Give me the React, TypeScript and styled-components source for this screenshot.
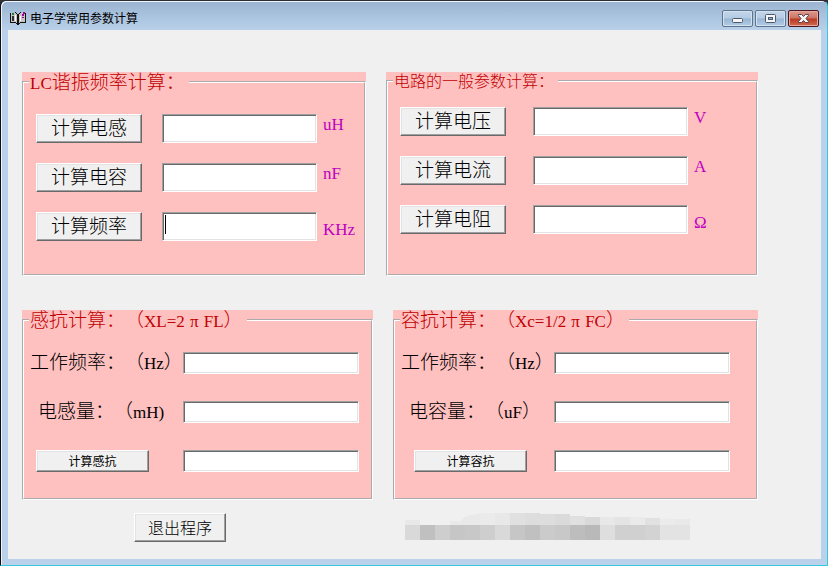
import React from "react";
import styled, { createGlobalStyle, css } from "styled-components";

const GlobalStyle = createGlobalStyle`
  *, *::before, *::after { box-sizing: border-box; }
  body {
    margin: 0;
    background: #2f3138;
    font-family: "Noto Sans CJK SC", sans-serif;
    font-weight: 300;
    text-spacing-trim: space-all;
    color: #000;
  }
`;

const Window = styled.div`
  display: flex;
  flex-direction: column;
  min-height: 100vh;
  padding: 0 6px 6px;
  background: linear-gradient(#9ab4d1 0, #b9d1ea 30px, #b9d1ea);
  border: 1px solid #35c8dc;
  border-top-color: #2b2d33;
  border-left-color: #111;
  border-radius: 6px 6px 0 0;
  box-shadow: inset 1px 1px 0 #eef5fc;
`;

const TitleBar = styled.header`
  display: flex;
  align-items: center;
  gap: 4px;
  height: 29px;
  padding: 5px 2px 0 3px;
`;

const Title = styled.h1`
  flex: 1;
  margin: 0;
  font-size: 12px;
  line-height: 16px;
  font-weight: 400;
`;

const Captions = styled.div`
  display: flex;
  align-self: flex-start;
  gap: 2px;
  padding-top: 4px;
`;

const CaptionButton = styled.button<{ $close?: boolean }>`
  display: grid;
  place-items: center;
  width: 31px;
  height: 17px;
  padding: 0;
  border: 1px solid ${(p) => (p.$close ? "#4d1420" : "#5f7389")};
  border-radius: 2px;
  background: ${(p) =>
    p.$close
      ? "linear-gradient(#dc9a8e 0, #cd7465 7px, #b93a22 8px, #cf6a50)"
      : "linear-gradient(#c3d6ea 0, #b3cbe3 7px, #98b5d3 8px, #b4cde6)"};
  box-shadow: inset 0 0 0 1px ${(p) => (p.$close ? "#e6a99d" : "#d3e2f1")};
`;

const Client = styled.main`
  flex: 1;
  margin-left: 1px;
  padding: 42px 63px 17px 14px;
  background: #f0f0f0;
`;

const PanelRow = styled.div`
  display: flex;
  gap: 20px;
  margin-bottom: 34px;

  & + & { margin-bottom: 13px; }
`;

const Panel = styled.section<{ $share: number }>`
  display: flex;
  flex: ${(p) => p.$share} 1 0;
  min-width: 0;
  background: #ffc0c0;
`;

const Group = styled.fieldset<{ $bottom: number }>`
  flex: 1;
  min-width: 0;
  margin: 0;
  padding: 0 0 ${(p) => p.$bottom}px;
  border: 2px groove #fff;
`;

const Legend = styled.legend<{ $small?: boolean }>`
  margin-left: 5px;
  padding: 0 4px 0 1px;
  color: #c00000;
  white-space: nowrap;
  font-size: ${(p) => (p.$small ? 16 : 19)}px;
  height: ${(p) => (p.$small ? 18 : 20)}px;
  line-height: ${(p) => (p.$small ? 16 : 18)}px;
`;

const Latin = styled.span`
  font-family: "Liberation Serif", serif;
  font-size: 17px;
  font-weight: 400;
  line-height: 0;
`;

const WideSymbol = styled(Latin)`
  display: inline-block;
  width: 19px;
  text-align: center;
`;

const CalcRows = styled.div<{ $top: number }>`
  display: grid;
  gap: 20px;
  padding: ${(p) => p.$top}px 12px 0;
`;

const CalcRow = styled.div<{ $gap: number }>`
  display: grid;
  grid-template-columns: 106px minmax(0, 155px) auto;
  column-gap: ${(p) => p.$gap}px;
  height: 29px;
`;

const raised = css`
  padding: 0;
  border: 1px solid;
  border-color: #fff #696969 #696969 #fff;
  background: #f0f0f0;
  box-shadow: inset -1px -1px 0 #a0a0a0, inset 1px 1px 0 #e3e3e3;
  color: #000;
  font-family: inherit;
  white-space: nowrap;
`;

const PushButton = styled.button`
  ${raised}
  padding-bottom: 4px;
  font-size: 19px;
  line-height: 22px;
  font-weight: 300;
`;

const SmallButton = styled.button<{ $indent: number }>`
  ${raised}
  width: 113px;
  height: 22px;
  margin-left: ${(p) => p.$indent}px;
  font-size: 12px;
  line-height: 18px;
  font-weight: 400;
`;

const ExitButton = styled.button`
  ${raised}
  width: 92px;
  height: 29px;
  padding-bottom: 2px;
  font-size: 16px;
  line-height: 22px;
  font-weight: 300;
`;

const Field = styled.input<{ $caret?: boolean }>`
  width: 100%;
  min-width: 0;
  height: 100%;
  padding: 0 3px;
  border: 1px solid;
  border-color: #a0a0a0 #fff #fff #a0a0a0;
  border-radius: 0;
  outline: none;
  background: #fff;
  box-shadow: inset 1px 1px 0 #696969, inset -1px -1px 0 #e3e3e3;
  font: 16px "Liberation Serif", serif;
  ${(p) =>
    p.$caret &&
    css`
      background: linear-gradient(#000, #000) 2px 2px / 1px 19px no-repeat #fff;
    `}
`;

const FieldAndUnit = styled.div`
  display: grid;
  grid-template-columns: 155px auto;
  column-gap: 6px;
`;

const Unit = styled.label<{ $low?: boolean }>`
  align-self: ${(p) => (p.$low ? "end" : "start")};
  color: #c000c0;
  font-family: "Liberation Serif", serif;
  font-size: 17px;
  font-weight: 400;
  line-height: 22px;
`;

const FormRows = styled.div`
  display: grid;
  gap: 27px;
  padding: 22px 12px 0 6px;
`;

const FormRow = styled.div`
  display: grid;
  grid-template-columns: 153px minmax(0, 176px);
  height: 22px;
`;

const FormLabel = styled.label<{ $indent?: number }>`
  padding-left: ${(p) => p.$indent ?? 0}px;
  font-size: 19px;
  line-height: 18px;
  white-space: nowrap;
`;

const Footer = styled.footer`
  display: flex;
  align-items: flex-start;
  gap: 179px;
  padding-left: 112px;
`;

const BookIcon = () => (
  <svg width="16" height="14" viewBox="0 0 16 14" aria-hidden="true">
    <path d="M1 2h5l2 2 2-2h5v10h-5l-2 1-2-1H1z" fill="#c8c4c4" />
    <path d="M0 2h1v10H0zM1 11h5v1H1zM6 12h1v1H6zM7 3h2v11H7zM9 12h1v1H9zM10 11h5v1h-5zM15 2h1v10h-1zM5 1h1v1H5zM6 2h1v1H6zM9 2h1v1H9zM10 1h1v1h-1z" fill="#111" />
    <path d="M2 5h2v5H2z" fill="#333" />
    <path d="M2 2h2v2H2z" fill="#18803a" />
    <path d="M5 4h1v6H5zM10 5h1v5h-1z" fill="#fff" />
    <path d="M12 3h2v2h-2zM13 1h2v2h-2zM12 6h2v1h-2z" fill="#a000a0" />
  </svg>
);

const lower = ["d9d9d9","c0c0c0","cecece","c6c6c6","c8c8c8","cecece","d9d9d9","c6c6c6","c0c0c0","cbcbcb","c8c8c8","bdbdbd","b9b9b9","dedede","d0d0d0","d0d0d0","d3d3d3","e3e3e3","e3e3e3"];
const upper: [number, number, string][] = [
  [0, 5, "e8e8e8"], [75, 12, "ebebeb"], [90, 12, "e8e8e8"], [105, 12, "e0e0e0"],
  [120, 12, "dddddd"], [135, 11, "dddddd"], [150, 11, "dadada"],
  [165, 9, "e0e0e0"], [180, 8, "d9d9d9"], [195, 8, "e8e8e8"], [210, 8, "e4e4e4"],
  [225, 8, "eaeaea"], [240, 7, "e1e1e1"], [255, 6, "ebebeb"], [270, 6, "e9e9e9"],
];

const Mosaic = () => (
  <svg width="285" height="27" viewBox="0 0 285 27" shapeRendering="crispEdges" aria-hidden="true">
    <path d="M45 8h7l3 1 4-5 6-2 10-1v11H45z" fill="#e9e9e9" />
    {upper.map(([x, h, c]) => (
      <rect key={x} x={x} y={12 - h} width="15" height={h} fill={`#${c}`} />
    ))}
    {lower.map((c, i) => (
      <rect key={i} x={i * 15} y="12" width="15" height="15" fill={`#${c}`} />
    ))}
  </svg>
);

type Calc = { id: string; action: string; unit: string; low?: boolean; caret?: boolean };

const resonance: Calc[] = [
  { id: "inductance", action: "计算电感", unit: "uH" },
  { id: "capacitance", action: "计算电容", unit: "nF" },
  { id: "frequency", action: "计算频率", unit: "KHz", low: true, caret: true },
];

const circuit: Calc[] = [
  { id: "voltage", action: "计算电压", unit: "V" },
  { id: "current", action: "计算电流", unit: "A" },
  { id: "resistance", action: "计算电阻", unit: "Ω", low: true },
];

const CalcList = ({ rows, top, gap }: { rows: Calc[]; top: number; gap: number }) => (
  <CalcRows $top={top}>
    {rows.map((r) => (
      <CalcRow key={r.id} $gap={gap}>
        <PushButton type="button">{r.action}</PushButton>
        <FieldAndUnit>
          <Field id={r.id} $caret={r.caret} />
          <Unit htmlFor={r.id} $low={r.low}>{r.unit}</Unit>
        </FieldAndUnit>
      </CalcRow>
    ))}
  </CalcRows>
);

type ReactanceProps = {
  id: string;
  quantity: string;
  unit: React.ReactNode;
  action: string;
  indent: number;
};

const ReactanceForm = ({ id, quantity, unit, action, indent }: ReactanceProps) => (
  <FormRows>
    <FormRow>
      <FormLabel htmlFor={`${id}-hz`}>工作频率：（<Latin>Hz</Latin>）</FormLabel>
      <Field id={`${id}-hz`} />
    </FormRow>
    <FormRow>
      <FormLabel htmlFor={`${id}-value`} $indent={8}>{quantity}：（{unit}</FormLabel>
      <Field id={`${id}-value`} />
    </FormRow>
    <FormRow>
      <SmallButton type="button" $indent={indent}>{action}</SmallButton>
      <Field aria-label={action} readOnly />
    </FormRow>
  </FormRows>
);

export default function App() {
  return (
    <>
      <GlobalStyle />
      <Window lang="zh-CN">
        <TitleBar>
          <BookIcon />
          <Title>电子学常用参数计算</Title>
          <Captions>
            <CaptionButton type="button" aria-label="最小化">
              <svg width="13" height="13" viewBox="0 0 13 13">
                <rect x="1.5" y="6.5" width="10" height="4" rx="1" fill="#f6f6f6" stroke="#4b586b" />
              </svg>
            </CaptionButton>
            <CaptionButton type="button" aria-label="最大化">
              <svg width="13" height="13" viewBox="0 0 13 13">
                <rect x="1.5" y="2.5" width="10" height="8" rx="1" fill="#f6f6f6" stroke="#4b586b" />
                <rect x="4.5" y="5.5" width="4" height="2" fill="#8fb0d2" stroke="#4b586b" />
              </svg>
            </CaptionButton>
            <CaptionButton type="button" aria-label="关闭" $close>
              <svg width="13" height="13" viewBox="0 0 13 13">
                <path d="M1.5 2.5h3l2 2 2-2h3v1L9 6.500l2.500 3v1h-3l-2-2-2 2h-3v-1L4 6.500l-2.500-3z" fill="#f6f6f6" stroke="#53404c" />
              </svg>
            </CaptionButton>
          </Captions>
        </TitleBar>
        <Client>
          <PanelRow>
            <Panel $share={344}>
              <Group $bottom={33}>
                <Legend><Latin>LC</Latin>谐振频率计算：</Legend>
                <CalcList rows={resonance} top={22} gap={20} />
              </Group>
            </Panel>
            <Panel $share={372}>
              <Group $bottom={40}>
                <Legend $small>电路的一般参数计算：</Legend>
                <CalcList rows={circuit} top={17} gap={27} />
              </Group>
            </Panel>
          </PanelRow>
          <PanelRow>
            <Panel $share={351}>
              <Group $bottom={26}>
                <Legend>感抗计算：（<Latin>XL=2</Latin><WideSymbol>π</WideSymbol><Latin>FL</Latin>）</Legend>
                <ReactanceForm id="xl" quantity="电感量" unit={<Latin>mH)</Latin>} action="计算感抗" indent={6} />
              </Group>
            </Panel>
            <Panel $share={365}>
              <Group $bottom={26}>
                <Legend>容抗计算：（<Latin>Xc=1/2</Latin><WideSymbol>π</WideSymbol><Latin>FC</Latin>）</Legend>
                <ReactanceForm id="xc" quantity="电容量" unit={<><Latin>uF</Latin>）</>} action="计算容抗" indent={13} />
              </Group>
            </Panel>
          </PanelRow>
          <Footer>
            <ExitButton type="button">退出程序</ExitButton>
            <Mosaic />
          </Footer>
        </Client>
      </Window>
    </>
  );
}
